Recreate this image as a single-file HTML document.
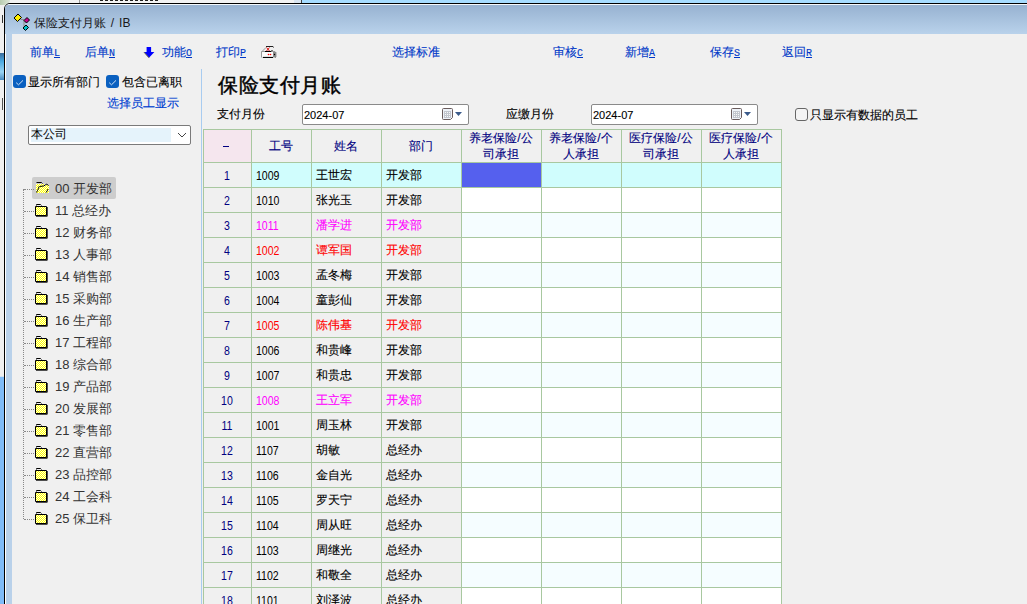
<!DOCTYPE html>
<html><head><meta charset="utf-8"><style>
*{margin:0;padding:0;box-sizing:border-box}
html,body{width:1027px;height:604px;overflow:hidden;background:#f0f0f0;position:relative;font-family:"Liberation Sans",sans-serif}
.a{-webkit-text-stroke:0.12px currentColor}
.a{position:absolute;white-space:nowrap}
.tb{font-size:12px;line-height:14px;color:#0038c8}
.tb u{text-decoration:underline;font-family:"Liberation Mono",monospace;font-size:10px}
.tr{font-size:13px;line-height:16px;color:#333;-webkit-text-stroke:0}
.g{font-size:12px;line-height:14px}
.hd{color:#000080;text-align:center}
.num{-webkit-text-stroke:0;font-size:12px;transform:scaleX(0.88);transform-origin:0 0}
</style></head><body>
<svg width="0" height="0" style="position:absolute"><defs><pattern id="chk" width="2" height="2" patternUnits="userSpaceOnUse"><rect width="2" height="2" fill="#ffffe0"/><rect width="1" height="1" fill="#ffff00"/><rect x="1" y="1" width="1" height="1" fill="#ffff00"/></pattern></defs></svg>
<div class="a" style="left:0;top:0;width:1027px;height:3px;background:#f2f2f2"></div>
<div class="a" style="left:302px;top:0;width:725px;height:3px;background:#a6dcff"></div>
<div class="a" style="left:294px;top:0;width:7px;height:3px;background:#d8e4f0"></div>
<div class="a" style="left:301px;top:0;width:1px;height:3px;background:#444"></div>
<div class="a" style="left:0;top:377px;width:4px;height:227px;background:#80bcf8"></div>
<div class="a" style="left:0;top:376px;width:4px;height:1px;background:#d6e4f2"></div>
<div class="a" style="left:0;top:53px;width:4px;height:27px;background:linear-gradient(#3a6a9a,#4aa8e0 30%,#9ad4f4 70%,#4a8ac0)"></div>
<div class="a" style="left:0;top:15px;width:3px;height:8px;border-right:1px solid #333"></div>
<div class="a" style="left:0;top:98px;width:3px;height:12px;border-right:1px solid #555"></div>
<div class="a" style="left:0;top:0;width:10px;height:5px;background:linear-gradient(90deg,#b8ccb0,#dde6d8);border-radius:0 0 6px 0"></div>
<div class="a" style="left:79px;top:0;width:1px;height:3px;background:#999"></div>
<div class="a" style="left:100px;top:0;width:60px;height:1px;background:repeating-linear-gradient(90deg,#222 0 3px,transparent 3px 5px)"></div>
<div class="a" style="left:4px;top:3px;width:1100px;height:700px;border:1px solid #000;border-radius:6px 0 0 0;background:#b9d1ea"></div>
<div class="a" style="left:5px;top:4px;width:1100px;height:700px;border-top:1px solid #f4f8fc;border-left:1px solid #fff;border-radius:5px 0 0 0"></div>
<div class="a" style="left:5px;top:5px;width:1100px;height:29px;background:linear-gradient(#97b2d1,#b9d2eb);border-radius:4px 0 0 0"></div>
<div class="a" style="left:12px;top:34px;width:1100px;height:700px;background:#f0f0f0"></div>
<svg class="a" style="left:12px;top:12px" width="20" height="20" viewBox="0 0 20 20">
<path d="M8.5 7.5h3.5v9h2" stroke="#8a8a8a" stroke-width="1" fill="none"/>
<path d="M2 6l4-4 3.5 3.5-4 4z" fill="#ffee00" stroke="#000" stroke-width="1"/>
<path d="M12 8.5l3-3 2.5 2.5-3 3z" fill="#c8008a" stroke="#000" stroke-width="1"/>
<path d="M11 16l3-3 2.5 2.5-3 3z" fill="#00c0c8" stroke="#000" stroke-width="1"/>
</svg>
<div class="a" style="left:34px;top:16px;font-size:12px;line-height:14px;color:#1a1a1a;-webkit-text-stroke:0">保险支付月账<span style="word-spacing:1px;letter-spacing:0.3px"> / IB</span></div>
<div class="a tb" style="left:30px;top:45px">前单<u>L</u></div>
<div class="a tb" style="left:85px;top:45px">后单<u>N</u></div>
<div class="a tb" style="left:162px;top:45px">功能<u>O</u></div>
<div class="a tb" style="left:216px;top:45px">打印<u>P</u></div>
<div class="a tb" style="left:553px;top:45px">审核<u>C</u></div>
<div class="a tb" style="left:625px;top:45px">新增<u>A</u></div>
<div class="a tb" style="left:710px;top:45px">保存<u>S</u></div>
<div class="a tb" style="left:782px;top:45px">返回<u>R</u></div>
<div class="a tb" style="left:392px;top:45px">选择标准</div>
<svg class="a" style="left:143px;top:46px" width="12" height="13" viewBox="0 0 12 13"><path d="M3.6 0.9h4.5v5.1h3.3L6 11.8 1 6h2.6z" fill="#0000ff"/><path d="M1 6.2l5 5.6" stroke="#5a5a3a" stroke-width="1"/></svg>
<svg class="a" style="left:260px;top:45px" width="17" height="13" viewBox="0 0 17 13"><path d="M1.5 6.5h13.5l1 1v4.5l-1.5 1.5H3l-1.5-1.5z" fill="#fbfbfb" stroke="#9a9a9a"/><rect x="13" y="7" width="3" height="5.5" fill="#8a8a8a"/><path d="M3 12.5h10" stroke="#000" stroke-width="1.2"/><path d="M5 6.5h6l1.5-1.5" stroke="#000" fill="none"/><path d="M6 1.5h7l0.5 1" stroke="#222" fill="none"/><path d="M6 2.5L2 6.5" stroke="#999" fill="none"/><path d="M6.5 2.5l3 3.5M9.5 2.5l-3 3.5" stroke="#e00000" stroke-width="0.9"/><circle cx="8.5" cy="9.5" r="0.8" fill="#f00"/><circle cx="10.5" cy="9.5" r="0.8" fill="#f00"/><circle cx="14.5" cy="9.5" r="0.7" fill="#000"/></svg>
<div class="a" style="left:13px;top:75px;width:13px;height:13px;background:#0a60c0;border-radius:3px"><svg width="13" height="13" viewBox="0 0 13 13"><path d="M3.2 6.7l2.3 2.1 4.5-4.4" stroke="#cfe2f6" stroke-width="1" fill="none"/></svg></div>
<div class="a" style="left:106px;top:75px;width:13px;height:13px;background:#0a60c0;border-radius:3px"><svg width="13" height="13" viewBox="0 0 13 13"><path d="M3.2 6.7l2.3 2.1 4.5-4.4" stroke="#cfe2f6" stroke-width="1" fill="none"/></svg></div>
<div class="a" style="left:28px;top:75px;font-size:12px;line-height:14px;color:#000">显示所有部门</div>
<div class="a" style="left:122px;top:75px;font-size:12px;line-height:14px;color:#000">包含已离职</div>
<div class="a" style="left:107px;top:96px;font-size:12px;line-height:14px;color:#0040d0">选择员工显示</div>
<div class="a" style="left:28px;top:125px;width:163px;height:20px;border:1px solid #7a7a7a;border-radius:2px;background:#fff"></div>
<div class="a" style="left:31px;top:128px;width:140px;height:14px;background:#e5f3fb"></div>
<div class="a" style="left:31px;top:127px;font-size:12px;line-height:14px;color:#000;-webkit-text-stroke:0">本公司</div>
<svg class="a" style="left:177px;top:131px" width="10" height="8" viewBox="0 0 10 8"><path d="M1 2l4 4 4-4" stroke="#444" fill="none"/></svg>
<div class="a" style="left:201px;top:69px;width:1px;height:540px;background:#a8ccf0"></div>
<div class="a" style="left:32px;top:177px;width:84px;height:22px;background:#cdcdcd;border-radius:2px"></div>
<div class="a" style="left:23px;top:189px;width:1px;height:330px;border-left:1px dotted #888"></div>
<div class="a" style="left:24px;top:189px;width:10px;height:1px;border-top:1px dotted #888"></div>
<svg class="a" style="left:36px;top:181px" width="14" height="13" viewBox="0 0 14 13"><path d="M0 3h8l1 1h4v8H0z" fill="url(#chk)"/><path d="M0.5 1.5h5l1 1" stroke="#000" fill="none"/><path d="M3.5 5.5l4-0.5 2-1 1-1 2 1.5" stroke="#000" fill="none"/><path d="M3 5.5l-0.5 2-1 2-1 2" stroke="#000" fill="none"/><path d="M12 8l-0.8 1.8-1 1.7" stroke="#000" fill="none"/></svg>
<div class="a tr" style="left:55px;top:181px">00 开发部</div>
<div class="a" style="left:24px;top:211px;width:10px;height:1px;border-top:1px dotted #888"></div>
<svg class="a" style="left:35px;top:204px" width="13" height="13" viewBox="0 0 13 13"><rect x="1" y="3" width="10.5" height="8.5" fill="url(#chk)"/><path d="M1.5 1.5v-1h4l1 1" stroke="#000" fill="none"/><path d="M0.5 2.5h11v9h-11z" stroke="#000" fill="none"/><path d="M12.25 3v9.25H1" stroke="#000" stroke-width="0.9" fill="none"/></svg>
<div class="a tr" style="left:55px;top:203px">11 总经办</div>
<div class="a" style="left:24px;top:233px;width:10px;height:1px;border-top:1px dotted #888"></div>
<svg class="a" style="left:35px;top:226px" width="13" height="13" viewBox="0 0 13 13"><rect x="1" y="3" width="10.5" height="8.5" fill="url(#chk)"/><path d="M1.5 1.5v-1h4l1 1" stroke="#000" fill="none"/><path d="M0.5 2.5h11v9h-11z" stroke="#000" fill="none"/><path d="M12.25 3v9.25H1" stroke="#000" stroke-width="0.9" fill="none"/></svg>
<div class="a tr" style="left:55px;top:225px">12 财务部</div>
<div class="a" style="left:24px;top:255px;width:10px;height:1px;border-top:1px dotted #888"></div>
<svg class="a" style="left:35px;top:248px" width="13" height="13" viewBox="0 0 13 13"><rect x="1" y="3" width="10.5" height="8.5" fill="url(#chk)"/><path d="M1.5 1.5v-1h4l1 1" stroke="#000" fill="none"/><path d="M0.5 2.5h11v9h-11z" stroke="#000" fill="none"/><path d="M12.25 3v9.25H1" stroke="#000" stroke-width="0.9" fill="none"/></svg>
<div class="a tr" style="left:55px;top:247px">13 人事部</div>
<div class="a" style="left:24px;top:277px;width:10px;height:1px;border-top:1px dotted #888"></div>
<svg class="a" style="left:35px;top:270px" width="13" height="13" viewBox="0 0 13 13"><rect x="1" y="3" width="10.5" height="8.5" fill="url(#chk)"/><path d="M1.5 1.5v-1h4l1 1" stroke="#000" fill="none"/><path d="M0.5 2.5h11v9h-11z" stroke="#000" fill="none"/><path d="M12.25 3v9.25H1" stroke="#000" stroke-width="0.9" fill="none"/></svg>
<div class="a tr" style="left:55px;top:269px">14 销售部</div>
<div class="a" style="left:24px;top:299px;width:10px;height:1px;border-top:1px dotted #888"></div>
<svg class="a" style="left:35px;top:292px" width="13" height="13" viewBox="0 0 13 13"><rect x="1" y="3" width="10.5" height="8.5" fill="url(#chk)"/><path d="M1.5 1.5v-1h4l1 1" stroke="#000" fill="none"/><path d="M0.5 2.5h11v9h-11z" stroke="#000" fill="none"/><path d="M12.25 3v9.25H1" stroke="#000" stroke-width="0.9" fill="none"/></svg>
<div class="a tr" style="left:55px;top:291px">15 采购部</div>
<div class="a" style="left:24px;top:321px;width:10px;height:1px;border-top:1px dotted #888"></div>
<svg class="a" style="left:35px;top:314px" width="13" height="13" viewBox="0 0 13 13"><rect x="1" y="3" width="10.5" height="8.5" fill="url(#chk)"/><path d="M1.5 1.5v-1h4l1 1" stroke="#000" fill="none"/><path d="M0.5 2.5h11v9h-11z" stroke="#000" fill="none"/><path d="M12.25 3v9.25H1" stroke="#000" stroke-width="0.9" fill="none"/></svg>
<div class="a tr" style="left:55px;top:313px">16 生产部</div>
<div class="a" style="left:24px;top:343px;width:10px;height:1px;border-top:1px dotted #888"></div>
<svg class="a" style="left:35px;top:336px" width="13" height="13" viewBox="0 0 13 13"><rect x="1" y="3" width="10.5" height="8.5" fill="url(#chk)"/><path d="M1.5 1.5v-1h4l1 1" stroke="#000" fill="none"/><path d="M0.5 2.5h11v9h-11z" stroke="#000" fill="none"/><path d="M12.25 3v9.25H1" stroke="#000" stroke-width="0.9" fill="none"/></svg>
<div class="a tr" style="left:55px;top:335px">17 工程部</div>
<div class="a" style="left:24px;top:365px;width:10px;height:1px;border-top:1px dotted #888"></div>
<svg class="a" style="left:35px;top:358px" width="13" height="13" viewBox="0 0 13 13"><rect x="1" y="3" width="10.5" height="8.5" fill="url(#chk)"/><path d="M1.5 1.5v-1h4l1 1" stroke="#000" fill="none"/><path d="M0.5 2.5h11v9h-11z" stroke="#000" fill="none"/><path d="M12.25 3v9.25H1" stroke="#000" stroke-width="0.9" fill="none"/></svg>
<div class="a tr" style="left:55px;top:357px">18 综合部</div>
<div class="a" style="left:24px;top:387px;width:10px;height:1px;border-top:1px dotted #888"></div>
<svg class="a" style="left:35px;top:380px" width="13" height="13" viewBox="0 0 13 13"><rect x="1" y="3" width="10.5" height="8.5" fill="url(#chk)"/><path d="M1.5 1.5v-1h4l1 1" stroke="#000" fill="none"/><path d="M0.5 2.5h11v9h-11z" stroke="#000" fill="none"/><path d="M12.25 3v9.25H1" stroke="#000" stroke-width="0.9" fill="none"/></svg>
<div class="a tr" style="left:55px;top:379px">19 产品部</div>
<div class="a" style="left:24px;top:409px;width:10px;height:1px;border-top:1px dotted #888"></div>
<svg class="a" style="left:35px;top:402px" width="13" height="13" viewBox="0 0 13 13"><rect x="1" y="3" width="10.5" height="8.5" fill="url(#chk)"/><path d="M1.5 1.5v-1h4l1 1" stroke="#000" fill="none"/><path d="M0.5 2.5h11v9h-11z" stroke="#000" fill="none"/><path d="M12.25 3v9.25H1" stroke="#000" stroke-width="0.9" fill="none"/></svg>
<div class="a tr" style="left:55px;top:401px">20 发展部</div>
<div class="a" style="left:24px;top:431px;width:10px;height:1px;border-top:1px dotted #888"></div>
<svg class="a" style="left:35px;top:424px" width="13" height="13" viewBox="0 0 13 13"><rect x="1" y="3" width="10.5" height="8.5" fill="url(#chk)"/><path d="M1.5 1.5v-1h4l1 1" stroke="#000" fill="none"/><path d="M0.5 2.5h11v9h-11z" stroke="#000" fill="none"/><path d="M12.25 3v9.25H1" stroke="#000" stroke-width="0.9" fill="none"/></svg>
<div class="a tr" style="left:55px;top:423px">21 零售部</div>
<div class="a" style="left:24px;top:453px;width:10px;height:1px;border-top:1px dotted #888"></div>
<svg class="a" style="left:35px;top:446px" width="13" height="13" viewBox="0 0 13 13"><rect x="1" y="3" width="10.5" height="8.5" fill="url(#chk)"/><path d="M1.5 1.5v-1h4l1 1" stroke="#000" fill="none"/><path d="M0.5 2.5h11v9h-11z" stroke="#000" fill="none"/><path d="M12.25 3v9.25H1" stroke="#000" stroke-width="0.9" fill="none"/></svg>
<div class="a tr" style="left:55px;top:445px">22 直营部</div>
<div class="a" style="left:24px;top:475px;width:10px;height:1px;border-top:1px dotted #888"></div>
<svg class="a" style="left:35px;top:468px" width="13" height="13" viewBox="0 0 13 13"><rect x="1" y="3" width="10.5" height="8.5" fill="url(#chk)"/><path d="M1.5 1.5v-1h4l1 1" stroke="#000" fill="none"/><path d="M0.5 2.5h11v9h-11z" stroke="#000" fill="none"/><path d="M12.25 3v9.25H1" stroke="#000" stroke-width="0.9" fill="none"/></svg>
<div class="a tr" style="left:55px;top:467px">23 品控部</div>
<div class="a" style="left:24px;top:497px;width:10px;height:1px;border-top:1px dotted #888"></div>
<svg class="a" style="left:35px;top:490px" width="13" height="13" viewBox="0 0 13 13"><rect x="1" y="3" width="10.5" height="8.5" fill="url(#chk)"/><path d="M1.5 1.5v-1h4l1 1" stroke="#000" fill="none"/><path d="M0.5 2.5h11v9h-11z" stroke="#000" fill="none"/><path d="M12.25 3v9.25H1" stroke="#000" stroke-width="0.9" fill="none"/></svg>
<div class="a tr" style="left:55px;top:489px">24 工会科</div>
<div class="a" style="left:24px;top:519px;width:10px;height:1px;border-top:1px dotted #888"></div>
<svg class="a" style="left:35px;top:512px" width="13" height="13" viewBox="0 0 13 13"><rect x="1" y="3" width="10.5" height="8.5" fill="url(#chk)"/><path d="M1.5 1.5v-1h4l1 1" stroke="#000" fill="none"/><path d="M0.5 2.5h11v9h-11z" stroke="#000" fill="none"/><path d="M12.25 3v9.25H1" stroke="#000" stroke-width="0.9" fill="none"/></svg>
<div class="a tr" style="left:55px;top:511px">25 保卫科</div>
<div class="a" style="left:218px;top:73px;font-size:20px;line-height:24px;font-weight:normal;-webkit-text-stroke:0.45px #000;color:#000;letter-spacing:0.6px">保险支付月账</div>
<div class="a" style="left:217px;top:107px;font-size:12px;line-height:14px;color:#000">支付月份</div>
<div class="a" style="left:506px;top:107px;font-size:12px;line-height:14px;color:#000">应缴月份</div>
<div class="a" style="left:302px;top:104px;width:167px;height:21px;border:1px solid #8a8a8a;border-radius:2px;background:#fff"></div>
<div class="a" style="left:304px;top:109px;font-size:11px;line-height:12px;color:#000">2024-07</div>
<svg class="a" style="left:442px;top:108px" width="22" height="13" viewBox="0 0 22 13"><path d="M0.5 1.5a1 1 0 0 1 1-1h8a1 1 0 0 1 1 1v8l-2 2h-7a1 1 0 0 1-1-1z" fill="#eef2f8" stroke="#6a5c5c"/><rect x="2" y="3" width="7" height="7" fill="#c2c6ce"/><rect x="3" y="4" width="1" height="1" fill="#f8f8f8"/><rect x="5" y="4" width="1" height="1" fill="#f8f8f8"/><rect x="7" y="4" width="1" height="1" fill="#f8f8f8"/><rect x="3" y="6" width="1" height="1" fill="#f8f8f8"/><rect x="5" y="6" width="1" height="1" fill="#f8f8f8"/><rect x="7" y="6" width="1" height="1" fill="#f8f8f8"/><rect x="3" y="8" width="1" height="1" fill="#f8f8f8"/><rect x="5" y="8" width="1" height="1" fill="#f8f8f8"/><rect x="7" y="8" width="1" height="1" fill="#f8f8f8"/><path d="M13 4h7l-3.5 4z" fill="#3a5a8a"/></svg>
<div class="a" style="left:591px;top:104px;width:167px;height:21px;border:1px solid #8a8a8a;border-radius:2px;background:#fff"></div>
<div class="a" style="left:593px;top:109px;font-size:11px;line-height:12px;color:#000">2024-07</div>
<svg class="a" style="left:731px;top:108px" width="22" height="13" viewBox="0 0 22 13"><path d="M0.5 1.5a1 1 0 0 1 1-1h8a1 1 0 0 1 1 1v8l-2 2h-7a1 1 0 0 1-1-1z" fill="#eef2f8" stroke="#6a5c5c"/><rect x="2" y="3" width="7" height="7" fill="#c2c6ce"/><rect x="3" y="4" width="1" height="1" fill="#f8f8f8"/><rect x="5" y="4" width="1" height="1" fill="#f8f8f8"/><rect x="7" y="4" width="1" height="1" fill="#f8f8f8"/><rect x="3" y="6" width="1" height="1" fill="#f8f8f8"/><rect x="5" y="6" width="1" height="1" fill="#f8f8f8"/><rect x="7" y="6" width="1" height="1" fill="#f8f8f8"/><rect x="3" y="8" width="1" height="1" fill="#f8f8f8"/><rect x="5" y="8" width="1" height="1" fill="#f8f8f8"/><rect x="7" y="8" width="1" height="1" fill="#f8f8f8"/><path d="M13 4h7l-3.5 4z" fill="#3a5a8a"/></svg>
<div class="a" style="left:795px;top:108px;width:13px;height:13px;border:1px solid #666;border-radius:3px;background:#f4f4f4"></div>
<div class="a" style="left:810px;top:108px;font-size:12px;line-height:14px;color:#000">只显示有数据的员工</div>
<div class="a" style="left:203px;top:129px;width:579px;height:480px;background:#f0f0f0"></div>
<div class="a" style="left:204px;top:130px;width:47px;height:32px;background:#f5e6ee"></div>
<div class="a" style="left:251px;top:162px;width:531px;height:25px;background:#d0fdfd"></div>
<div class="a" style="left:462px;top:163px;width:79px;height:24px;background:#5560ee"></div>
<div class="a" style="left:461px;top:187px;width:321px;height:25px;background:#ffffff"></div>
<div class="a" style="left:461px;top:212px;width:321px;height:25px;background:#f5fdff"></div>
<div class="a" style="left:461px;top:237px;width:321px;height:25px;background:#ffffff"></div>
<div class="a" style="left:461px;top:262px;width:321px;height:25px;background:#f5fdff"></div>
<div class="a" style="left:461px;top:287px;width:321px;height:25px;background:#ffffff"></div>
<div class="a" style="left:461px;top:312px;width:321px;height:25px;background:#f5fdff"></div>
<div class="a" style="left:461px;top:337px;width:321px;height:25px;background:#ffffff"></div>
<div class="a" style="left:461px;top:362px;width:321px;height:25px;background:#f5fdff"></div>
<div class="a" style="left:461px;top:387px;width:321px;height:25px;background:#ffffff"></div>
<div class="a" style="left:461px;top:412px;width:321px;height:25px;background:#f5fdff"></div>
<div class="a" style="left:461px;top:437px;width:321px;height:25px;background:#ffffff"></div>
<div class="a" style="left:461px;top:462px;width:321px;height:25px;background:#f5fdff"></div>
<div class="a" style="left:461px;top:487px;width:321px;height:25px;background:#ffffff"></div>
<div class="a" style="left:461px;top:512px;width:321px;height:25px;background:#f5fdff"></div>
<div class="a" style="left:461px;top:537px;width:321px;height:25px;background:#ffffff"></div>
<div class="a" style="left:461px;top:562px;width:321px;height:25px;background:#f5fdff"></div>
<div class="a" style="left:461px;top:587px;width:321px;height:25px;background:#ffffff"></div>
<div class="a" style="left:203px;top:129px;width:1px;height:480px;background:#a8c8a0"></div>
<div class="a" style="left:251px;top:129px;width:1px;height:480px;background:#a8c8a0"></div>
<div class="a" style="left:311px;top:129px;width:1px;height:480px;background:#a8c8a0"></div>
<div class="a" style="left:381px;top:129px;width:1px;height:480px;background:#a8c8a0"></div>
<div class="a" style="left:461px;top:129px;width:1px;height:480px;background:#a8c8a0"></div>
<div class="a" style="left:541px;top:129px;width:1px;height:480px;background:#a8c8a0"></div>
<div class="a" style="left:621px;top:129px;width:1px;height:480px;background:#a8c8a0"></div>
<div class="a" style="left:701px;top:129px;width:1px;height:480px;background:#a8c8a0"></div>
<div class="a" style="left:781px;top:129px;width:1px;height:480px;background:#a8c8a0"></div>
<div class="a" style="left:203px;top:129px;width:579px;height:1px;background:#a8c8a0"></div>
<div class="a" style="left:203px;top:162px;width:579px;height:1px;background:#a8c8a0"></div>
<div class="a" style="left:203px;top:187px;width:579px;height:1px;background:#a8c8a0"></div>
<div class="a" style="left:203px;top:212px;width:579px;height:1px;background:#a8c8a0"></div>
<div class="a" style="left:203px;top:237px;width:579px;height:1px;background:#a8c8a0"></div>
<div class="a" style="left:203px;top:262px;width:579px;height:1px;background:#a8c8a0"></div>
<div class="a" style="left:203px;top:287px;width:579px;height:1px;background:#a8c8a0"></div>
<div class="a" style="left:203px;top:312px;width:579px;height:1px;background:#a8c8a0"></div>
<div class="a" style="left:203px;top:337px;width:579px;height:1px;background:#a8c8a0"></div>
<div class="a" style="left:203px;top:362px;width:579px;height:1px;background:#a8c8a0"></div>
<div class="a" style="left:203px;top:387px;width:579px;height:1px;background:#a8c8a0"></div>
<div class="a" style="left:203px;top:412px;width:579px;height:1px;background:#a8c8a0"></div>
<div class="a" style="left:203px;top:437px;width:579px;height:1px;background:#a8c8a0"></div>
<div class="a" style="left:203px;top:462px;width:579px;height:1px;background:#a8c8a0"></div>
<div class="a" style="left:203px;top:487px;width:579px;height:1px;background:#a8c8a0"></div>
<div class="a" style="left:203px;top:512px;width:579px;height:1px;background:#a8c8a0"></div>
<div class="a" style="left:203px;top:537px;width:579px;height:1px;background:#a8c8a0"></div>
<div class="a" style="left:203px;top:562px;width:579px;height:1px;background:#a8c8a0"></div>
<div class="a" style="left:203px;top:587px;width:579px;height:1px;background:#a8c8a0"></div>
<div class="a" style="left:203px;top:612px;width:579px;height:1px;background:#a8c8a0"></div>
<div class="a" style="left:223px;top:146px;width:6px;height:1px;background:#000080"></div>
<div class="a g hd" style="left:251px;top:139px;width:60px">工号</div>
<div class="a g hd" style="left:311px;top:139px;width:70px">姓名</div>
<div class="a g hd" style="left:381px;top:139px;width:80px">部门</div>
<div class="a g hd" style="left:461px;top:130px;width:80px;line-height:16px">养老保险<span style="margin:0 0.8px">/</span>公<br>司承担</div>
<div class="a g hd" style="left:541px;top:130px;width:80px;line-height:16px">养老保险<span style="margin:0 0.8px">/</span>个<br>人承担</div>
<div class="a g hd" style="left:621px;top:130px;width:80px;line-height:16px">医疗保险<span style="margin:0 0.8px">/</span>公<br>司承担</div>
<div class="a g hd" style="left:701px;top:130px;width:80px;line-height:16px">医疗保险<span style="margin:0 0.8px">/</span>个<br>人承担</div>
<div class="a g hd num" style="left:203px;top:169px;width:48px;transform-origin:50% 0">1</div>
<div class="a g num" style="left:256px;top:169px;color:#000">1009</div>
<div class="a g" style="left:316px;top:168px;color:#000">王世宏</div>
<div class="a g" style="left:386px;top:168px;color:#000">开发部</div>
<div class="a g hd num" style="left:203px;top:194px;width:48px;transform-origin:50% 0">2</div>
<div class="a g num" style="left:256px;top:194px;color:#000">1010</div>
<div class="a g" style="left:316px;top:193px;color:#000">张光玉</div>
<div class="a g" style="left:386px;top:193px;color:#000">开发部</div>
<div class="a g hd num" style="left:203px;top:219px;width:48px;transform-origin:50% 0">3</div>
<div class="a g num" style="left:256px;top:219px;color:#ff00ff">1011</div>
<div class="a g" style="left:316px;top:218px;color:#ff00ff">潘学进</div>
<div class="a g" style="left:386px;top:218px;color:#ff00ff">开发部</div>
<div class="a g hd num" style="left:203px;top:244px;width:48px;transform-origin:50% 0">4</div>
<div class="a g num" style="left:256px;top:244px;color:#ff0000">1002</div>
<div class="a g" style="left:316px;top:243px;color:#ff0000">谭军国</div>
<div class="a g" style="left:386px;top:243px;color:#ff0000">开发部</div>
<div class="a g hd num" style="left:203px;top:269px;width:48px;transform-origin:50% 0">5</div>
<div class="a g num" style="left:256px;top:269px;color:#000">1003</div>
<div class="a g" style="left:316px;top:268px;color:#000">孟冬梅</div>
<div class="a g" style="left:386px;top:268px;color:#000">开发部</div>
<div class="a g hd num" style="left:203px;top:294px;width:48px;transform-origin:50% 0">6</div>
<div class="a g num" style="left:256px;top:294px;color:#000">1004</div>
<div class="a g" style="left:316px;top:293px;color:#000">童彭仙</div>
<div class="a g" style="left:386px;top:293px;color:#000">开发部</div>
<div class="a g hd num" style="left:203px;top:319px;width:48px;transform-origin:50% 0">7</div>
<div class="a g num" style="left:256px;top:319px;color:#ff0000">1005</div>
<div class="a g" style="left:316px;top:318px;color:#ff0000">陈伟基</div>
<div class="a g" style="left:386px;top:318px;color:#ff0000">开发部</div>
<div class="a g hd num" style="left:203px;top:344px;width:48px;transform-origin:50% 0">8</div>
<div class="a g num" style="left:256px;top:344px;color:#000">1006</div>
<div class="a g" style="left:316px;top:343px;color:#000">和贵峰</div>
<div class="a g" style="left:386px;top:343px;color:#000">开发部</div>
<div class="a g hd num" style="left:203px;top:369px;width:48px;transform-origin:50% 0">9</div>
<div class="a g num" style="left:256px;top:369px;color:#000">1007</div>
<div class="a g" style="left:316px;top:368px;color:#000">和贵忠</div>
<div class="a g" style="left:386px;top:368px;color:#000">开发部</div>
<div class="a g hd num" style="left:203px;top:394px;width:48px;transform-origin:50% 0">10</div>
<div class="a g num" style="left:256px;top:394px;color:#ff00ff">1008</div>
<div class="a g" style="left:316px;top:393px;color:#ff00ff">王立军</div>
<div class="a g" style="left:386px;top:393px;color:#ff00ff">开发部</div>
<div class="a g hd num" style="left:203px;top:419px;width:48px;transform-origin:50% 0">11</div>
<div class="a g num" style="left:256px;top:419px;color:#000">1001</div>
<div class="a g" style="left:316px;top:418px;color:#000">周玉林</div>
<div class="a g" style="left:386px;top:418px;color:#000">开发部</div>
<div class="a g hd num" style="left:203px;top:444px;width:48px;transform-origin:50% 0">12</div>
<div class="a g num" style="left:256px;top:444px;color:#000">1107</div>
<div class="a g" style="left:316px;top:443px;color:#000">胡敏</div>
<div class="a g" style="left:386px;top:443px;color:#000">总经办</div>
<div class="a g hd num" style="left:203px;top:469px;width:48px;transform-origin:50% 0">13</div>
<div class="a g num" style="left:256px;top:469px;color:#000">1106</div>
<div class="a g" style="left:316px;top:468px;color:#000">金自光</div>
<div class="a g" style="left:386px;top:468px;color:#000">总经办</div>
<div class="a g hd num" style="left:203px;top:494px;width:48px;transform-origin:50% 0">14</div>
<div class="a g num" style="left:256px;top:494px;color:#000">1105</div>
<div class="a g" style="left:316px;top:493px;color:#000">罗天宁</div>
<div class="a g" style="left:386px;top:493px;color:#000">总经办</div>
<div class="a g hd num" style="left:203px;top:519px;width:48px;transform-origin:50% 0">15</div>
<div class="a g num" style="left:256px;top:519px;color:#000">1104</div>
<div class="a g" style="left:316px;top:518px;color:#000">周从旺</div>
<div class="a g" style="left:386px;top:518px;color:#000">总经办</div>
<div class="a g hd num" style="left:203px;top:544px;width:48px;transform-origin:50% 0">16</div>
<div class="a g num" style="left:256px;top:544px;color:#000">1103</div>
<div class="a g" style="left:316px;top:543px;color:#000">周继光</div>
<div class="a g" style="left:386px;top:543px;color:#000">总经办</div>
<div class="a g hd num" style="left:203px;top:569px;width:48px;transform-origin:50% 0">17</div>
<div class="a g num" style="left:256px;top:569px;color:#000">1102</div>
<div class="a g" style="left:316px;top:568px;color:#000">和敬全</div>
<div class="a g" style="left:386px;top:568px;color:#000">总经办</div>
<div class="a g hd num" style="left:203px;top:594px;width:48px;transform-origin:50% 0">18</div>
<div class="a g num" style="left:256px;top:594px;color:#000">1101</div>
<div class="a g" style="left:316px;top:593px;color:#000">刘泽波</div>
<div class="a g" style="left:386px;top:593px;color:#000">总经办</div>
</body></html>
